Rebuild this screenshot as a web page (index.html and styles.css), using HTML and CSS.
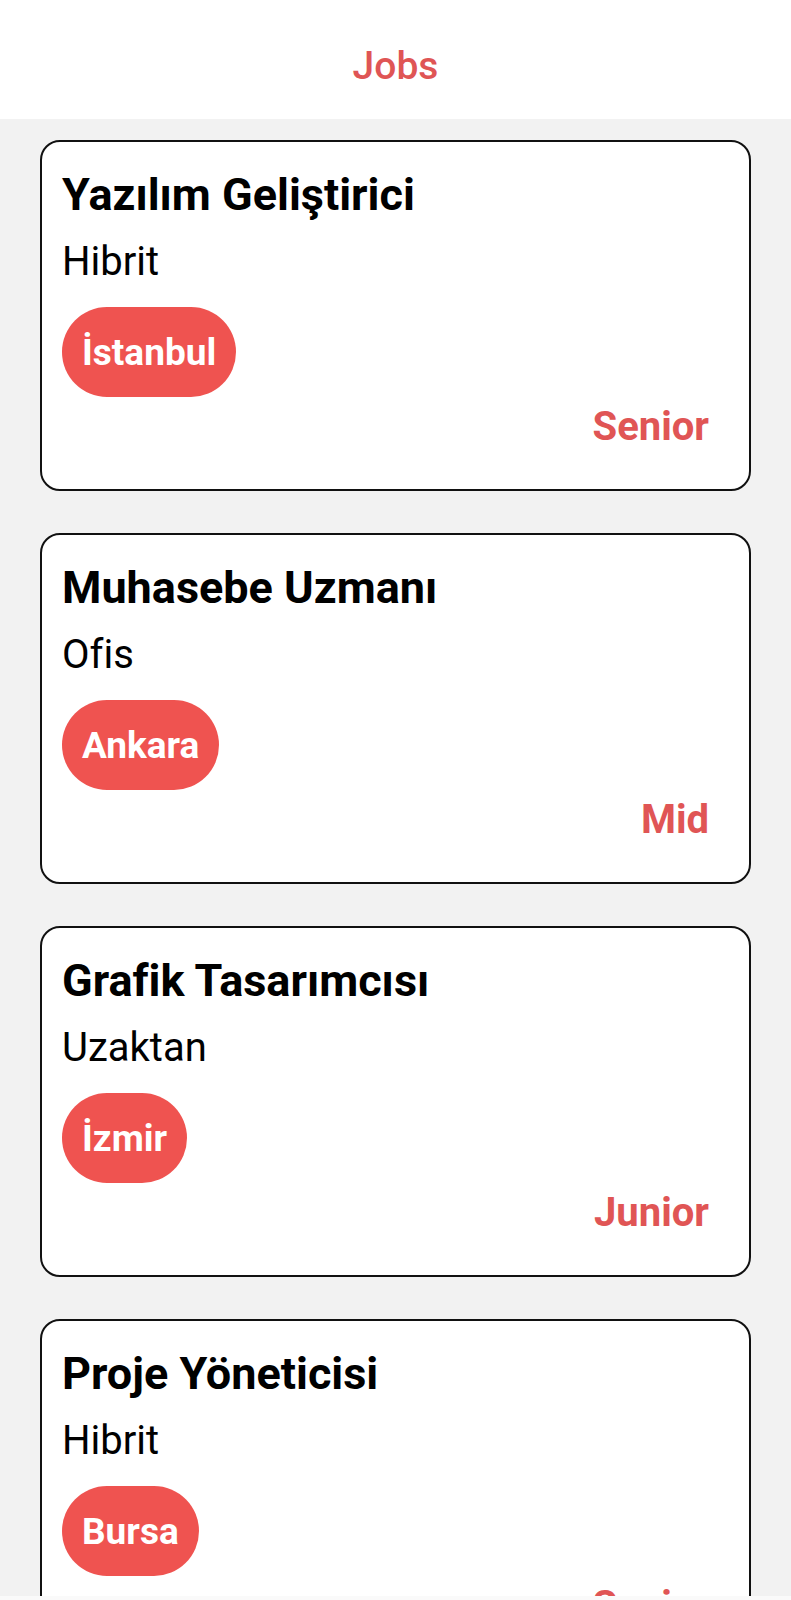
FILE: index.html
```html
<!DOCTYPE html>
<html lang="tr">
<head>
<meta charset="utf-8">
<title>Jobs</title>
<link rel="stylesheet" href="styles.css">
</head>
<body>
<header class="topbar">
  <h1 class="topbar-title">Jobs</h1>
</header>
<main class="job-list">
  <article class="job-card">
    <h2 class="job-title">Yazılım Geliştirici</h2>
    <p class="job-type">Hibrit</p>
    <div class="job-tags"><span class="city-pill">İstanbul</span></div>
    <p class="job-level">Senior</p>
  </article>
  <article class="job-card">
    <h2 class="job-title">Muhasebe Uzmanı</h2>
    <p class="job-type">Ofis</p>
    <div class="job-tags"><span class="city-pill">Ankara</span></div>
    <p class="job-level">Mid</p>
  </article>
  <article class="job-card">
    <h2 class="job-title">Grafik Tasarımcısı</h2>
    <p class="job-type">Uzaktan</p>
    <div class="job-tags"><span class="city-pill">İzmir</span></div>
    <p class="job-level">Junior</p>
  </article>
  <article class="job-card">
    <h2 class="job-title">Proje Yöneticisi</h2>
    <p class="job-type">Hibrit</p>
    <div class="job-tags"><span class="city-pill">Bursa</span></div>
    <p class="job-level">Senior</p>
  </article>
</main>
<div class="nav-strip"></div>
</body>
</html>
```

FILE: styles.css
```css
html, body {
  margin: 0;
  padding: 0;
}

body {
  font-family: Roboto, "Liberation Sans", sans-serif;
  background: #f2f2f2;
  color: #000;
}

.topbar {
  background: #fff;
  height: 119px;
  box-sizing: border-box;
  padding-top: 43px;
  text-align: center;
}

.topbar-title {
  margin: 0;
  font-size: 39px;
  font-weight: 500;
  line-height: normal;
  color: #df5555;
}

.job-list {
  display: flex;
  flex-direction: column;
}

.job-card {
  margin: 21px 40px;
  background: #fff;
  border: 2px solid #111;
  border-radius: 20px;
  padding: 26px 40px 39px 20px;
  display: flex;
  flex-direction: column;
}

.job-title {
  margin: 0;
  font-size: 45px;
  font-weight: 700;
  line-height: normal;
  color: #000;
}

.job-type {
  margin: 17px 0 0;
  font-size: 40px;
  font-weight: 400;
  line-height: normal;
}

.job-tags {
  display: flex;
  margin-top: 22px;
}

.city-pill {
  display: flex;
  align-items: center;
  height: 90px;
  padding: 0 20px;
  border-radius: 45px;
  background: #ef5350;
  color: #fff;
  font-size: 37px;
  font-weight: 700;
}

.job-level {
  margin: 6px 0 0;
  text-align: right;
  font-size: 40px;
  font-weight: 700;
  line-height: normal;
  color: #e05555;
}

.nav-strip {
  position: fixed;
  left: 0;
  right: 0;
  bottom: 0;
  height: 4px;
  background: #fafafa;
}
```
